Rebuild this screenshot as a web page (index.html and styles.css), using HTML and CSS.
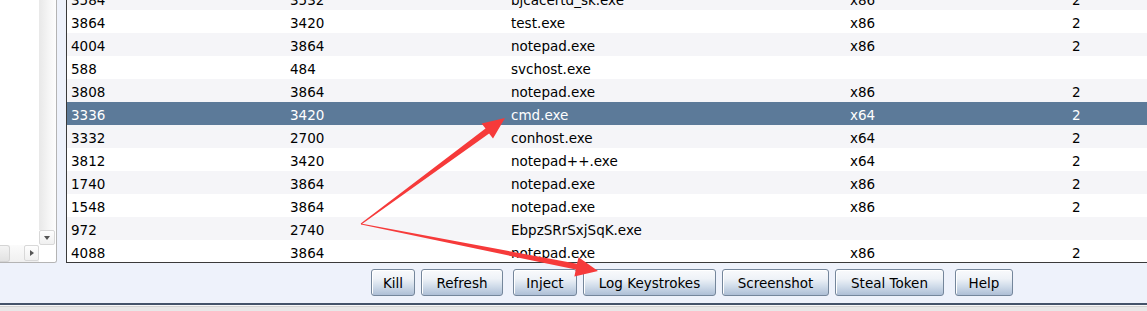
FILE: index.html
```html
<!DOCTYPE html>
<html>
  <head>
    <title>Processes</title>
    <link rel="stylesheet" href="styles.css">
  </head>
  <body>
    <div class="main">
      <div class="side">
        <div class="side-view"></div>
        <div class="vscroll">
          <div class="track"></div>
          <div class="arrow-btn down"></div>
        </div>
        <div class="hscroll">
          <div class="thumb"></div>
          <div class="track"></div>
          <div class="arrow-btn right"></div>
        </div>
        <div class="corner"></div>
      </div>

      <div class="table-wrap">
        <table class="procs">
          <colgroup>
            <col class="c-pid">
            <col class="c-ppid">
            <col class="c-name">
            <col class="c-arch">
            <col class="c-sess">
          </colgroup>
          <tbody>
            <tr class="odd"><td>3584</td><td>3532</td><td>bjcacertd_sk.exe</td><td>x86</td><td>2</td></tr>
            <tr><td>3864</td><td>3420</td><td>test.exe</td><td>x86</td><td>2</td></tr>
            <tr class="odd"><td>4004</td><td>3864</td><td>notepad.exe</td><td>x86</td><td>2</td></tr>
            <tr><td>588</td><td>484</td><td>svchost.exe</td><td></td><td></td></tr>
            <tr class="odd"><td>3808</td><td>3864</td><td>notepad.exe</td><td>x86</td><td>2</td></tr>
            <tr class="selected"><td>3336</td><td>3420</td><td>cmd.exe</td><td>x64</td><td>2</td></tr>
            <tr class="odd"><td>3332</td><td>2700</td><td>conhost.exe</td><td>x64</td><td>2</td></tr>
            <tr><td>3812</td><td>3420</td><td>notepad++.exe</td><td>x64</td><td>2</td></tr>
            <tr class="odd"><td>1740</td><td>3864</td><td>notepad.exe</td><td>x86</td><td>2</td></tr>
            <tr><td>1548</td><td>3864</td><td>notepad.exe</td><td>x86</td><td>2</td></tr>
            <tr class="odd"><td>972</td><td>2740</td><td>EbpzSRrSxjSqK.exe</td><td></td><td></td></tr>
            <tr><td>4088</td><td>3864</td><td>notepad.exe</td><td>x86</td><td>2</td></tr>
          </tbody>
        </table>
      </div>
    </div>

    <div class="bar">
      <button class="btn b-kill">Kill</button>
      <button class="btn b-refresh">Refresh</button>
      <button class="btn sep b-inject">Inject</button>
      <button class="btn b-keys">Log Keystrokes</button>
      <button class="btn b-shot">Screenshot</button>
      <button class="btn b-token">Steal Token</button>
      <button class="btn sep b-help">Help</button>
    </div>

    <div class="status"></div>

    <!-- annotation arrows drawn over the screenshot -->
    <svg class="marks" width="1147" height="311" viewBox="0 0 1147 311" xmlns="http://www.w3.org/2000/svg">
      <polygon fill="#f63a3a" points="361.3,224.6 489.1,133.4 493,138.6 505,118 481.6,123.6 485.5,128.6 360.7,223.4" />
      <polygon fill="#f63a3a" points="360.9,223.4 577,263.8 578.6,257.2 598,271 574.4,276.4 575.8,269.6 361.1,224.6" />
    </svg>
  </body>
</html>
```

FILE: styles.css
```css
body {
  margin: 0;
  width: 1147px;
  height: 311px;
  overflow: hidden;
  position: relative;
  background: #eef2fb;
  font-family: "DejaVu Sans", sans-serif;
  font-size: 13.5px;
  color: #000;
}
.main {
  display: flex;
  height: 263px;
}

/* left panel with its scrollbars */
.side {
  width: 56px;
  height: 262px;
  background: #fff;
  border-right: 1px solid #b4b4b4;
  border-bottom: 1px solid #b4b4b4;
  border-bottom-right-radius: 3px;
  display: grid;
  grid-template-columns: 39px 17px;
  grid-template-rows: 245px 17px;
  overflow: hidden;
}
.vscroll {
  display: flex;
  flex-direction: column;
}
.vscroll .track {
  flex: 1;
  background: linear-gradient(to right, #e8e8e8, #f6f6f6 60%, #fdfdfd);
}
.hscroll {
  display: flex;
  background: linear-gradient(#fbfbfb, #f0f0f0);
}
.hscroll .thumb {
  width: 9px;
  border: 1px solid #d4d4d4;
  border-left: none;
  border-radius: 0 3px 3px 0;
  background: linear-gradient(#f4f4f4, #e2e2e2);
}
.hscroll .track {
  flex: 1;
}
.arrow-btn {
  position: relative;
  box-sizing: border-box;
  border: 1px solid #d8d8d8;
  border-radius: 2px;
  background: linear-gradient(#fefefe, #f0f0f0);
}
.arrow-btn.down {
  height: 15px;
  width: 16px;
}
.arrow-btn.right {
  width: 15px;
  height: 16px;
}
.arrow-btn::after {
  content: "";
  position: absolute;
  width: 0;
  height: 0;
}
.arrow-btn.down::after {
  left: 4px;
  top: 5px;
  border-left: 3.5px solid transparent;
  border-right: 3.5px solid transparent;
  border-top: 4px solid #555;
}
.arrow-btn.right::after {
  left: 5px;
  top: 4px;
  border-top: 3.5px solid transparent;
  border-bottom: 3.5px solid transparent;
  border-left: 4px solid #555;
}
.corner {
  background: #fff;
}

/* process table */
.table-wrap {
  flex: 1;
  margin-left: 9px;
  height: 262px;
  overflow: hidden;
  background: #fff;
  border-left: 1px solid #3a3a3a;
  border-bottom: 1px solid #3a3a3a;
}
.procs {
  table-layout: fixed;
  width: 1080px;
  border-collapse: collapse;
  margin-top: -13px;
}
.c-pid { width: 219px; }
.c-ppid { width: 221px; }
.c-name { width: 339px; }
.c-arch { width: 222px; }
.c-sess { width: 79px; }
.procs td {
  height: 20px;
  padding: 3px 4px 0;
  line-height: 20px;
  white-space: nowrap;
  overflow: hidden;
}
.procs tr.odd {
  background: #f5f5f8;
}
.procs tr.selected {
  background: #5c7a99;
  color: #fff;
}

/* buttons */
.bar {
  height: 40px;
  box-sizing: border-box;
  padding: 6px 0 0 371px;
  display: flex;
  align-items: flex-start;
}
.btn {
  height: 27px;
  margin: 0 0 0 6px;
  padding: 0;
  text-align: center;
  font-family: "DejaVu Sans", sans-serif;
  font-size: 13.5px;
  color: #000;
  border: 1px solid #74869b;
  border-radius: 3px;
  background: linear-gradient(#f9fafc 0%, #eef2f7 35%, #d0dcea 65%, #aebfd6 100%);
  box-shadow: inset 1px 1px 0 #fff;
}
.btn:first-child {
  margin-left: 0;
}
.btn.sep {
  margin-left: 10px;
}
.b-kill { width: 44px; }
.b-refresh { width: 82px; }
.b-inject { width: 64px; }
.b-keys { width: 133px; }
.b-shot { width: 107px; }
.b-token { width: 109px; }
.b-help { width: 58px; }
.btn.b-help { margin-left: 11px; }

.status {
  height: 6px;
  border-top: 2px solid #44536a;
  box-shadow: inset 0 1px 0 #f8f8f8, inset 0 2px 0 #d2d2d2;
  background: #e8e8e8;
}

.marks {
  position: absolute;
  left: 0;
  top: 0;
  pointer-events: none;
}
```
